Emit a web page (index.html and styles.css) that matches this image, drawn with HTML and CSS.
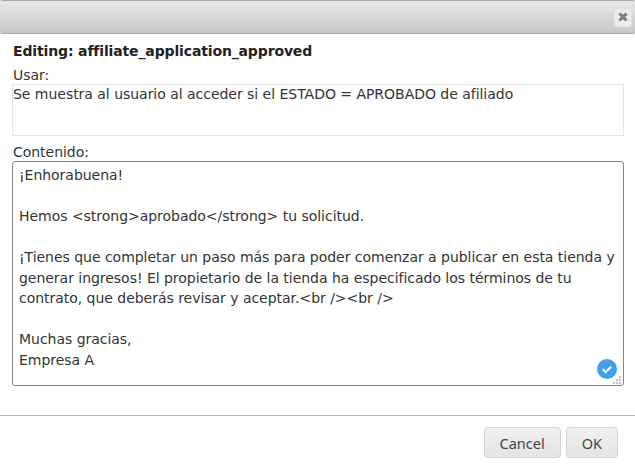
FILE: index.html
```html
<!DOCTYPE html>
<html lang="es">
<head>
<meta charset="utf-8">
<title>Editing</title>
<link rel="stylesheet" href="styles.css">
</head>
<body>
<div class="dialog">
  <header class="titlebar">
    <button class="close" aria-label="Cerrar">
      <svg width="10" height="10" viewBox="0 0 10 10"><path d="M2.6 0.4 5 2.8 7.4 0.4 9.6 2.6 7.2 5 9.6 7.4 7.4 9.6 5 7.2 2.6 9.6 0.4 7.4 2.8 5 0.4 2.6Z" fill="#7f7f7f"/></svg>
    </button>
  </header>
  <main class="body">
    <h1 class="heading">Editing: affiliate_application_approved</h1>
    <label class="label">Usar:</label>
    <div class="usage">Se muestra al usuario al acceder si el ESTADO = APROBADO de afiliado</div>
    <label class="label label-content">Contenido:</label>
    <div class="editor">
      <div class="editor-text">¡Enhorabuena!

Hemos &lt;strong&gt;aprobado&lt;/strong&gt; tu solicitud.

¡Tienes que completar un paso más para poder comenzar a publicar en esta tienda y generar ingresos! El propietario de la tienda ha especificado los términos de tu contrato, que deberás revisar y aceptar.&lt;br /&gt;&lt;br /&gt;

Muchas gracias,
Empresa A</div>
      <svg class="check" width="20" height="20" viewBox="0 0 20 20"><circle cx="10" cy="10" r="10" fill="#3d9fee"/><path d="M5.8 10.3 8.6 13 14.2 7.6" fill="none" stroke="#fff" stroke-width="2.2"/></svg>
      <svg class="grip" width="8" height="8" viewBox="0 0 8 8"><path d="M6 0h2v2H6zM3 3h2v2H3zM6 3h2v2H6zM0 6h2v2H0zM3 6h2v2H3zM6 6h2v2H6z" fill="#c4c4c4"/></svg>
    </div>
  </main>
  <footer class="footer">
    <button class="btn">Cancel</button>
    <button class="btn">OK</button>
  </footer>
</div>
</body>
</html>
```
FILE: styles.css
```css
* { box-sizing: border-box; }
html, body { margin: 0; height: 100%; background: #fff; overflow: hidden; }
body { font-family: "DejaVu Sans", sans-serif; font-size: 14px; letter-spacing: -0.03px; color: #333; }
.dialog { width: 635px; height: 468px; display: flex; flex-direction: column; }
.titlebar {
  height: 34px;
  background: linear-gradient(#e6e6e6, #c8c8c8);
  border-top: 1px solid #a9a9a9;
  border-bottom: 1px solid #a9a9a9;
  border-radius: 2px;
  display: flex;
  justify-content: flex-end;
  align-items: center;
  padding: 0 3px 0 0;
}
.close {
  width: 18px; height: 19px; padding: 0;
  background: #ececec;
  border: 1px solid #e2e2e2;
  border-radius: 3px;
  display: flex; align-items: center; justify-content: center;
}
.body { flex: 1; padding: 9px 11px 0 12px; }
.heading { margin: 0 0 0 1px; font-size: 14px; line-height: 17px; font-weight: bold; letter-spacing: -0.14px; color: #222; }
.label { display: block; margin-left: 1px; line-height: 17px; color: #333; }
.heading + .label { margin-top: 7px; }
.usage {
  height: 52px; padding: 0;
  border: 1px solid #e5e5e5;
  line-height: 19px; color: #333;
}
.label-content { margin-top: 8px; }
.editor {
  position: relative;
  height: 225px;
  border: 1px solid #7d8790;
  border-radius: 3px;
  padding: 3px 6px;
}
.editor-text { white-space: pre-wrap; line-height: 20.5px; color: #333; }
.check { position: absolute; right: 6px; bottom: 6px; }
.grip { position: absolute; right: 2px; bottom: 1px; }
.footer {
  height: 53px;
  border-top: 1px solid #b4b4b4;
  display: flex;
  justify-content: flex-end;
  align-items: flex-start;
  gap: 5px;
  padding: 11px 17px 0 0;
}
.btn {
  height: 31px;
  padding: 0 15px;
  font: 14.5px "Noto Sans", sans-serif;
  letter-spacing: 0;
  color: #444;
  background: linear-gradient(#f1f1f1, #e4e4e4);
  border: 1px solid #d2d2d2;
  border-radius: 4px;
}
```
